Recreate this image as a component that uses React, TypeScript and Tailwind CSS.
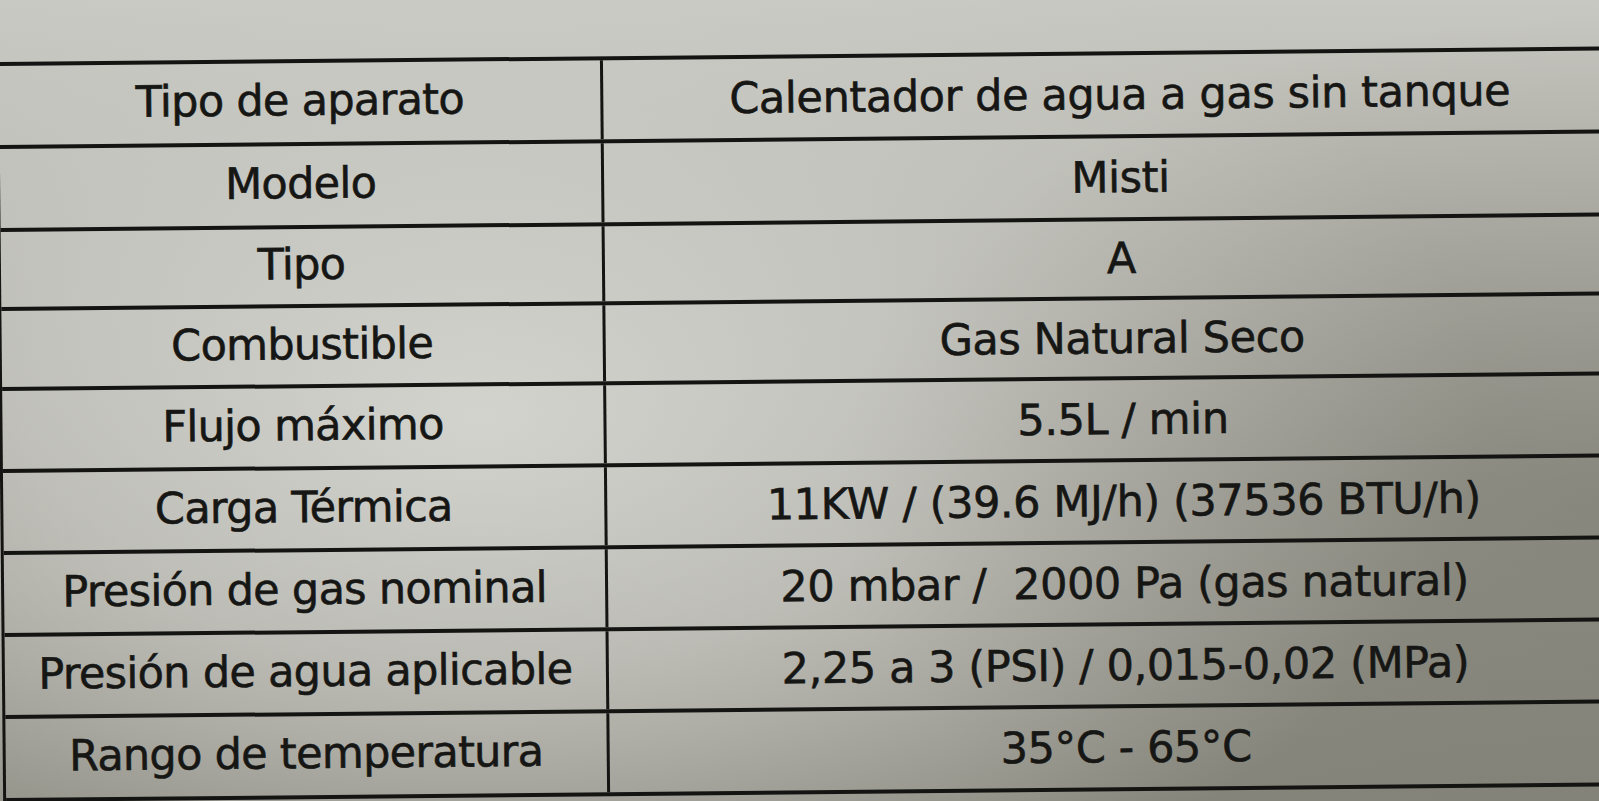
const rows: { label: string; value: string; h: string }[] = [
  { label: "Tipo de aparato", value: "Calentador de agua a gas sin tanque", h: "h-[83px]" },
  { label: "Modelo", value: "Misti", h: "h-[83px]" },
  { label: "Tipo", value: "A", h: "h-[79px]" },
  { label: "Combustible", value: "Gas Natural Seco", h: "h-[80px]" },
  { label: "Flujo máximo", value: "5.5L / min", h: "h-[82px]" },
  { label: "Carga Térmica", value: "11KW / (39.6 MJ/h) (37536 BTU/h)", h: "h-[82px]" },
  { label: "Presión de gas nominal", value: "20 mbar /  2000 Pa (gas natural)", h: "h-[82px]" },
  { label: "Presión de agua aplicable", value: "2,25 a 3 (PSI) / 0,015-0,02 (MPa)", h: "h-[82px]" },
  { label: "Rango de temperatura", value: "35°C - 65°C", h: "h-[83px]" },
]

export default function App() {
  return (
    // photographed spec sheet: paper lit from the upper left, shadowed to the right
    <div className="h-[801px] w-full overflow-hidden bg-[radial-gradient(ellipse_760px_480px_at_100%_62%,rgba(110,110,100,0.38)_0%,rgba(110,110,100,0)_100%),radial-gradient(ellipse_1000px_560px_at_30%_52%,rgba(214,214,209,0.95)_0%,rgba(207,207,202,0.7)_45%,rgba(200,200,195,0)_100%),linear-gradient(180deg,#c8c8c2_0%,#b8b8b1_22%,#99988f_60%,#87867c_100%)] font-['DejaVu_Sans',sans-serif] text-[#161614] [-webkit-text-stroke:0.6px_#161614]">
      {/* the sheet sits a little crooked under the camera */}
      <div className="mt-[54px] w-[1640px] origin-[830px_420px] rotate-[-0.56deg] border-l-[3px] border-t-4 border-[#141412]">
        {rows.map((r) => (
          <div
            key={r.label}
            className={`grid grid-cols-[604px_1fr] border-b-4 border-[#141412] ${r.h}`}
          >
            <div className="flex items-center justify-center border-r-[3px] border-[#141412] pb-1 text-[43px] leading-none tracking-[-0.7px]">
              {r.label}
            </div>
            <div className="flex items-center justify-center whitespace-pre text-[43px] leading-none tracking-[-0.4px]">
              {r.value}
            </div>
          </div>
        ))}
      </div>
    </div>
  )
}
